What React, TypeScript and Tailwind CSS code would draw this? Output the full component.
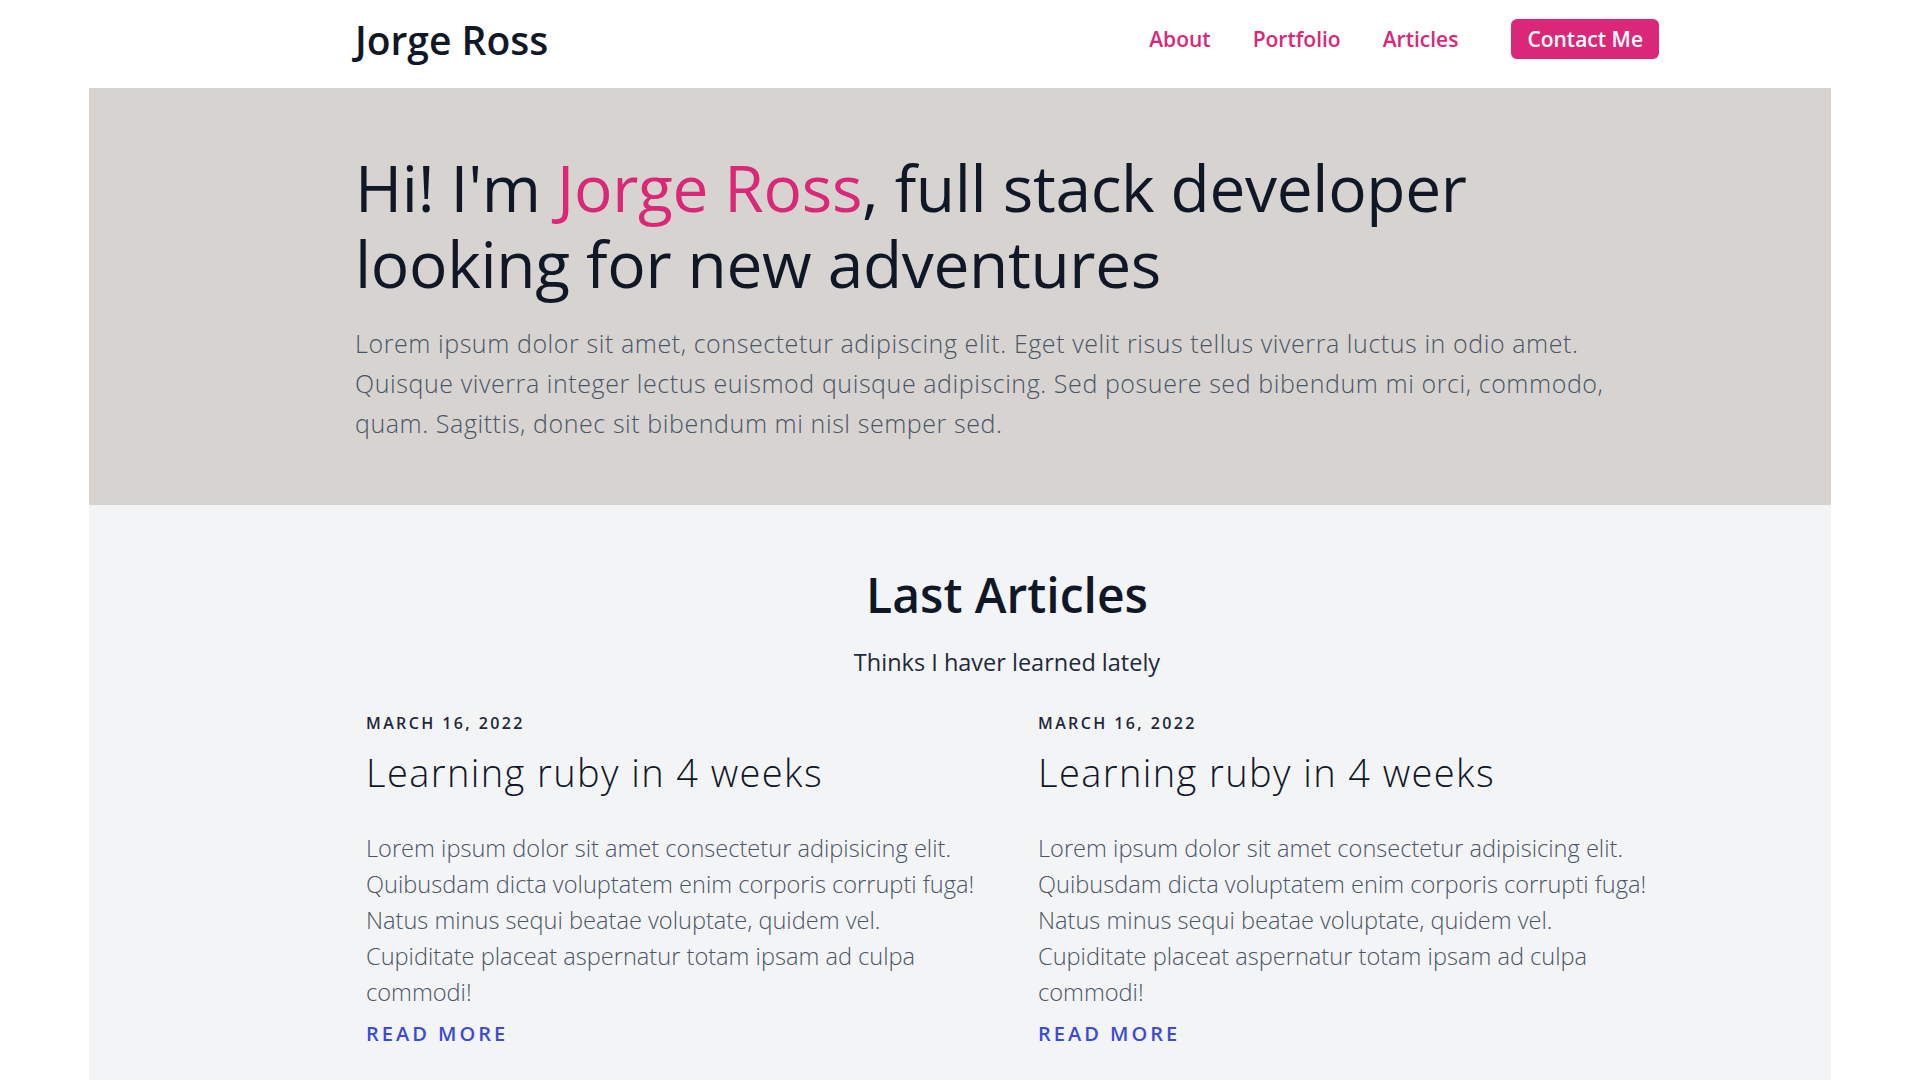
const articles = [
  {
    date: "March 16, 2022",
    title: "Learning ruby in 4 weeks",
    body: "Lorem ipsum dolor sit amet consectetur adipisicing elit. Quibusdam dicta voluptatem enim corporis corrupti fuga! Natus minus sequi beatae voluptate, quidem vel. Cupiditate placeat aspernatur totam ipsam ad culpa commodi!",
  },
  {
    date: "March 16, 2022",
    title: "Learning ruby in 4 weeks",
    body: "Lorem ipsum dolor sit amet consectetur adipisicing elit. Quibusdam dicta voluptatem enim corporis corrupti fuga! Natus minus sequi beatae voluptate, quidem vel. Cupiditate placeat aspernatur totam ipsam ad culpa commodi!",
  },
];

export default function App() {
  return (
    <div className="min-h-screen bg-white font-['Open_Sans',sans-serif] text-gray-900">
      {/* Header */}
      <header className="h-[88px] bg-white">
        <div className="ml-[355px] flex h-[78px] w-[1304px] items-center justify-between">
          <a href="#" className="text-[39px] font-semibold leading-none text-gray-900">
            Jorge Ross
          </a>
          <nav className="flex items-center gap-[42px] text-[21px] leading-7 font-semibold text-[#db2777]">
            <a href="#">About</a>
            <a href="#">Portfolio</a>
            <a href="#">Articles</a>
            <a
              href="#"
              className="ml-[11px] rounded-md bg-[#db2777] px-4 py-[6px] text-white"
            >
              Contact Me
            </a>
          </nav>
        </div>
      </header>

      <main className="mx-[89px]">
        {/* Hero */}
        <section className="bg-stone-300 py-[62px]">
          <div className="ml-[266px] w-[1304px]">
            <h1 className="text-[64px] font-normal leading-[76px] tracking-[-0.005em] text-gray-900">
              Hi! I'm <span className="font-medium text-[#db2777]">Jorge Ross</span>, full stack
              developer
              <br />
              looking for new adventures
            </h1>
            <p className="mt-[21px] text-[25px] font-light leading-10 tracking-[0.023em] text-gray-600">
              Lorem ipsum dolor sit amet, consectetur adipiscing elit. Eget velit risus tellus
              viverra luctus in odio amet. Quisque viverra integer lectus euismod quisque
              adipiscing. Sed posuere sed bibendum mi orci, commodo, quam. Sagittis, donec sit
              bibendum mi nisl semper sed.
            </p>
          </div>
        </section>

        {/* Articles */}
        <section className="bg-gray-100 pt-[66px] pb-16">
          <div className="ml-[266px] w-[1304px]">
            <h2 className="text-center text-5xl font-semibold leading-none text-gray-900">
              Last Articles
            </h2>
            <p className="mt-[29px] text-center text-[23.5px] leading-7 text-gray-800">
              Thinks I haver learned lately
            </p>
            <div className="mt-[35px] grid grid-cols-[620px_620px] gap-x-[52px] pl-[11px]">
              {articles.map((a, i) => (
                <article key={i}>
                  <p className="text-base font-semibold uppercase tracking-[0.15em] text-gray-800">
                    {a.date}
                  </p>
                  <h3 className="mt-[17px] text-[38px] font-light leading-10 tracking-[0.037em] text-gray-900">
                    {a.title}
                  </h3>
                  <p className="mt-[38px] text-[23.6px] font-light leading-9 text-gray-600">
                    {a.body}
                  </p>
                  <a
                    href="#"
                    className="mt-[10px] inline-block text-xl font-semibold uppercase tracking-[0.15em] text-[#3b4bd6]"
                  >
                    Read more
                  </a>
                </article>
              ))}
            </div>
          </div>
        </section>
      </main>
    </div>
  );
}
